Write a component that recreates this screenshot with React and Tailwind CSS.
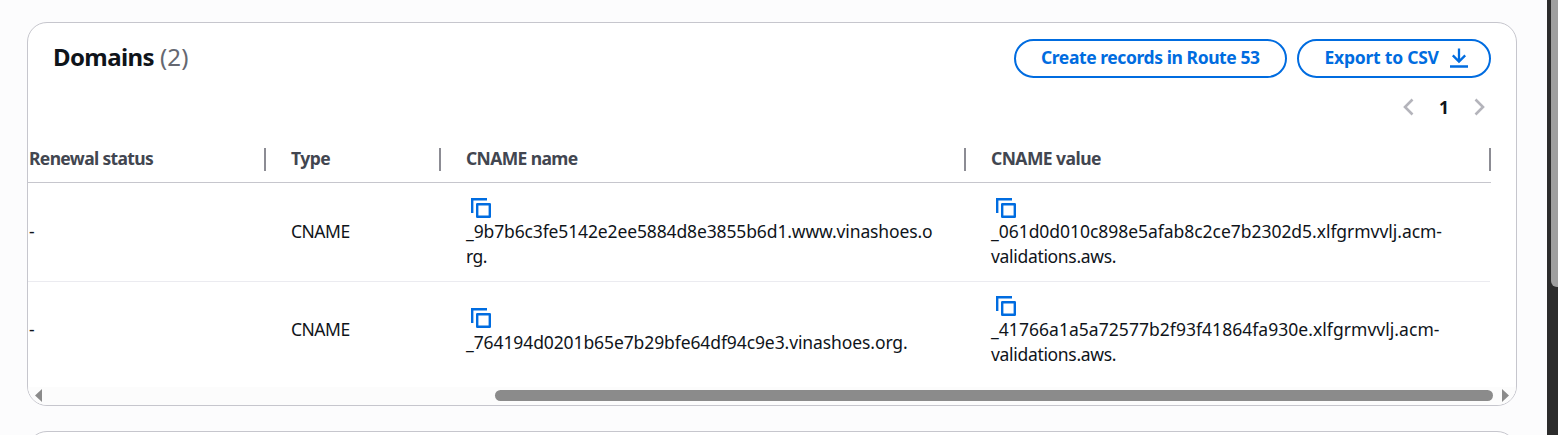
const columns = "grid grid-cols-[237px_175px_525px_525px]";

function CopyIcon({ className = "" }) {
  return (
    <svg className={"block h-5 w-5 " + className} viewBox="0 0 20 20" fill="none" stroke="#006ce0" strokeWidth="2.4">
      <path d="M1.2 15V1.2H16" />
      <path d="M6.2 6.2H18.8V18.8H6.2Z" strokeLinejoin="round" />
    </svg>
  );
}

function HeaderCell({ children, className = "" }) {
  return (
    <div className={"flex h-[23px] items-start border-r-2 border-[#8c8c94] font-bold leading-[21px] text-[#424650] " + className}>
      <span>{children}</span>
    </div>
  );
}

function Line({ children, className = "" }) {
  return (
    <div className="whitespace-nowrap leading-[25px]">
      <span className={className}>{children}</span>
    </div>
  );
}

export default function App() {
  return (
    <div className="flex h-[435px] w-[1558px] overflow-hidden bg-[#fcfcfd] font-['Noto_Sans','Open_Sans',sans-serif] text-[17.5px] text-[#0f141a]">
      <main className="flex w-[1547px] flex-col pt-[22px] pl-[27px]">
        <section className="flex h-[384px] w-[1490px] shrink-0 flex-col overflow-hidden rounded-[20px] border border-[#c6c6cd] bg-white">
          <header className="flex h-[71px] shrink-0 items-start justify-between pt-4 pr-[25px] pl-[25px]">
            <h2 className="flex gap-1.5 pt-[3px] text-[24px] leading-[30px]">
              <span className="w-[101px] font-bold tracking-[-0.6px]">Domains</span>
              <span className="tracking-[0.1px] text-[#656871]">(2)</span>
            </h2>
            <div className="flex gap-2.5 font-bold text-[#006ce0]">
              <button className="flex h-[39px] w-[273px] items-center rounded-full border-2 border-[#006ce0] pb-0.5 pl-[25px] whitespace-nowrap">
                <span className="tracking-[-0.42px]">Create records in Route 53</span>
              </button>
              <button className="flex h-[39px] w-[194px] items-center justify-between rounded-full border-2 border-[#006ce0] pr-[21px] pb-0.5 pl-[25.5px] whitespace-nowrap">
                <span className="tracking-[-0.23px]">Export to CSV</span>
                <svg className="h-5 w-[18px]" viewBox="0 0 18 20" fill="none" stroke="currentColor" strokeWidth="2.3">
                  <path d="M9 .5V14M2.800 7.400l6.200 6.200 6.200-6.200M0 18.500h18" />
                </svg>
              </button>
            </div>
          </header>
          <nav className="flex h-[26px] shrink-0 items-center justify-end gap-[25px] pr-[31px]">
            <svg className="h-[18px] w-[11px]" viewBox="0 0 11 18" fill="none" stroke="#b4b4bb" strokeWidth="2.6">
              <path d="M9.5 1.5 2 9l7.500 7.500" />
            </svg>
            <span className="text-center font-bold">1</span>
            <svg className="h-[18px] w-[11px]" viewBox="0 0 11 18" fill="none" stroke="#b4b4bb" strokeWidth="2.6">
              <path d="M1.500 1.500 9 9l-7.500 7.500" />
            </svg>
          </nav>
          <div className={columns + " mt-[28px] h-[35px] w-[1463px] shrink-0 border-b border-[#c6c6cd]"}>
            <HeaderCell className="w-[238px] pl-px tracking-[-0.65px]">Renewal status</HeaderCell>
            <HeaderCell className="ml-[26px] w-[150px] tracking-[-0.5px]">Type</HeaderCell>
            <HeaderCell className="ml-[26px] w-[500px] tracking-[-0.62px]">CNAME name</HeaderCell>
            <HeaderCell className="ml-[26px] w-[500px] tracking-[-0.55px]">CNAME value</HeaderCell>
          </div>
          <div className={columns + " h-[99px] w-[1462px] shrink-0 border-b border-[#ebebf0]"}>
            <div className="pt-9 pl-px"><Line>-</Line></div>
            <div className="pt-9 pl-[26px]"><Line className="tracking-[-0.5px]">CNAME</Line></div>
            <div className="pt-[15px] pl-[26px]">
              <CopyIcon className="mb-[1px] ml-[5px]" />
              <Line className="tracking-[-0.13px]">_9b7b6c3fe5142e2ee5884d8e3855b6d1.www.vinashoes.o</Line>
              <Line className="tracking-[-0.5px]">rg.</Line>
            </div>
            <div className="pt-[15px] pl-[26px]">
              <CopyIcon className="mb-[1px] ml-[5px]" />
              <Line className="tracking-[-0.04px]">_061d0d010c898e5afab8c2ce7b2302d5.xlfgrmvvlj.acm-</Line>
              <Line className="tracking-[-0.32px]">validations.aws.</Line>
            </div>
          </div>
          <div className={columns + " h-[105px] w-[1462px] shrink-0"}>
            <div className="pt-[35px] pl-px"><Line>-</Line></div>
            <div className="pt-[35px] pl-[26px]"><Line className="tracking-[-0.5px]">CNAME</Line></div>
            <div className="pt-[26px] pl-[26px]">
              <CopyIcon className="mb-[2px] ml-[5px]" />
              <Line className="tracking-[-0.1px]">_764194d0201b65e7b29bfe64df94c9e3.vinashoes.org.</Line>
            </div>
            <div className="pt-[14px] pl-[26px]">
              <CopyIcon className="mb-[1px] ml-[5px]" />
              <Line className="tracking-[0.04px]">_41766a1a5a72577b2f93f41864fa930e.xlfgrmvvlj.acm-</Line>
              <Line className="tracking-[-0.32px]">validations.aws.</Line>
            </div>
          </div>
          <div className="flex h-[18px] shrink-0 items-center justify-between bg-[#fcfcfc] px-[7px] pb-[2px]">
            <svg className="h-[13px] w-[7px]" viewBox="0 0 7 13" fill="#8b8b8b"><path d="M7 0v13L0 6.500Z" /></svg>
            <div className="mr-[9px] ml-auto h-[11px] w-[998px] rounded-full bg-[#8b8b8b]" />
            <svg className="h-[13px] w-[7px]" viewBox="0 0 7 13" fill="#8b8b8b"><path d="M0 0v13l7-6.500Z" /></svg>
          </div>
        </section>
        <section className="mt-[25px] h-[60px] w-[1490px] shrink-0 rounded-[20px] border border-[#c6c6cd] bg-white" />
      </main>
      <aside className="w-[11px] bg-[#2c2c2c] pl-1">
        <div className="h-[287px] w-3 rounded-b-[6px] bg-[#9f9f9f]" />
      </aside>
    </div>
  );
}
